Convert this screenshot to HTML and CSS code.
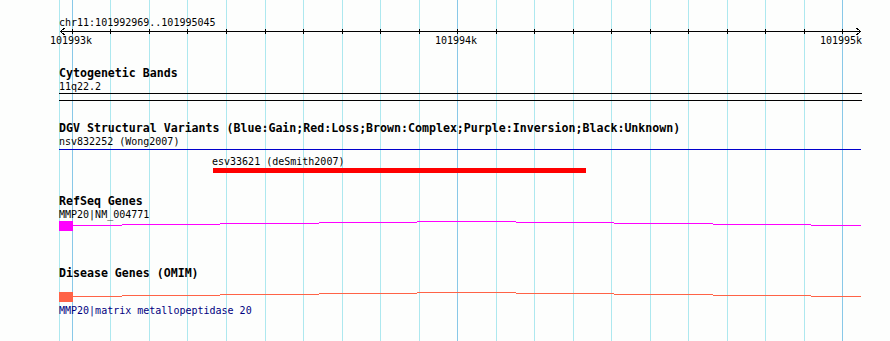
FILE: index.html
```html
<!DOCTYPE html>
<html lang="en">
<head>
    <meta charset="UTF-8">
    <meta name="viewport" content="width=device-width, initial-scale=1.0">
    <title>chr11:101992969..101995045</title>
    <link rel="stylesheet" href="styles.css">
</head>
<body>
    <div class="panel">
        <!-- grid lines every 100 bp, major every 1 kb -->
        <svg class="grid" width="890" height="341">
            <path class="minor" d="M59.5 0V341 M110.5 0V341 M149.5 0V341 M187.5 0V341 M226.5 0V341 M265.5 0V341 M303.5 0V341 M342.5 0V341 M380.5 0V341 M419.5 0V341 M496.5 0V341 M534.5 0V341 M573.5 0V341 M611.5 0V341 M650.5 0V341 M688.5 0V341 M727.5 0V341 M765.5 0V341 M804.5 0V341"/>
            <path class="major" d="M72.5 0V341 M457.5 0V341 M842.5 0V341"/>
        </svg>

        <section class="ruler">
            <div class="landmark">chr11:101992969..101995045</div>
            <svg class="axis" width="890" height="20">
                <path class="stroke" d="M60 2.5H861"/>
                <path class="stroke" d="M64.5 -1L60.5 2.5L64.5 6 M856.5 -1L860.5 2.5L856.5 6"/>
                <path class="stroke" d="M72.5 0V5 M110.5 0V5 M149.5 0V5 M187.5 0V5 M226.5 0V5 M265.5 0V5 M303.5 0V5 M342.5 0V5 M380.5 0V5 M419.5 0V5 M457.5 0V5 M496.5 0V5 M534.5 0V5 M573.5 0V5 M611.5 0V5 M650.5 0V5 M688.5 0V5 M727.5 0V5 M765.5 0V5 M804.5 0V5 M842.5 0V5"/>
                <text x="71" y="15" text-anchor="middle">101993k</text>
                <text x="456" y="15" text-anchor="middle">101994k</text>
                <text x="841" y="15" text-anchor="middle">101995k</text>
            </svg>
        </section>

        <section class="track track-cyto">
            <h2 class="track-title">Cytogenetic Bands</h2>
            <div class="feature-label">11q22.2</div>
            <svg class="glyphs" width="890" height="8">
                <path class="band" d="M59 0.5H862 M59 7.5H862"/>
            </svg>
        </section>

        <section class="track track-dgv">
            <h2 class="track-title">DGV Structural Variants (Blue:Gain;Red:Loss;Brown:Complex;Purple:Inversion;Black:Unknown)</h2>
            <div class="feature-label">nsv832252 (Wong2007)</div>
            <svg class="glyphs" width="890" height="28">
                <path class="gain" d="M59 1.5H861"/>
                <text x="212" y="17">esv33621 (deSmith2007)</text>
                <rect class="loss" x="213" y="20" width="373" height="5"/>
            </svg>
        </section>

        <section class="track track-refseq">
            <h2 class="track-title">RefSeq Genes</h2>
            <div class="feature-label">MMP20|NM_004771</div>
            <svg class="glyphs" width="890" height="10">
                <rect class="refseq-fill" x="59" y="0" width="14" height="10"/>
                <path class="refseq-line" d="M73 4.5H122 M122 3.5H220 M220 2.5H319 M319 1.5H417 M417 0.5H516 M516 1.5H614 M614 2.5H713 M713 3.5H811 M811 4.5H861"/>
            </svg>
        </section>

        <section class="track track-omim">
            <h2 class="track-title">Disease Genes (OMIM)</h2>
            <svg class="glyphs" width="890" height="22">
                <rect class="omim-fill" x="59" y="12" width="14" height="10"/>
                <path class="omim-line" d="M73 16.5H122 M122 15.5H220 M220 14.5H319 M319 13.5H417 M417 12.5H516 M516 13.5H614 M614 14.5H713 M713 15.5H811 M811 16.5H861"/>
            </svg>
            <div class="feature-desc">MMP20|matrix metallopeptidase 20</div>
        </section>
    </div>
</body>
</html>
```

FILE: styles.css
```css
body {
    margin: 0;
    padding: 0;
    background: #fdfefd;
}

.panel {
    position: relative;
    width: 890px;
    height: 341px;
    overflow: hidden;
    padding-top: 16px;
    box-sizing: border-box;
    font-family: "DejaVu Sans Mono", monospace;
    font-size: 10px;
    line-height: 13px;
    color: #000;
}

.grid {
    position: absolute;
    top: 0;
    left: 0;
    z-index: 0;
}

.grid .minor {
    stroke: #ade8ef;
    stroke-width: 1;
}

.grid .major {
    stroke: #88c8e8;
    stroke-width: 1;
}

.ruler, .track {
    position: relative;
    z-index: 1;
}

svg {
    display: block;
    overflow: visible;
    shape-rendering: crispEdges;
}

svg text {
    font-family: "DejaVu Sans Mono", monospace;
    font-size: 10px;
    fill: #000;
}

.landmark, .feature-label, .feature-desc, .track-title {
    padding-left: 59px;
    white-space: nowrap;
}

.stroke {
    stroke: #000;
    stroke-width: 1;
    fill: none;
}

.track-title {
    margin: 0;
    font-size: 11.6px;
    font-weight: bold;
    line-height: 13px;
}

.track-cyto {
    margin-top: 18px;
}

.track-dgv {
    margin-top: 21px;
}

.track-refseq {
    margin-top: 19px;
}

.track-omim {
    margin-top: 36px;
}

.band {
    stroke: #000;
    stroke-width: 1;
}

.gain {
    stroke: #0000cc;
    stroke-width: 1;
}

.loss {
    fill: #ff0000;
}

.refseq-fill {
    fill: #ff00ff;
}

.refseq-line {
    stroke: #ff00ff;
    stroke-width: 1;
}

.omim-fill {
    fill: #ff6347;
}

.omim-line {
    stroke: #ff6347;
    stroke-width: 1;
}

.feature-desc {
    margin-top: 2px;
    color: #000080;
}
```
